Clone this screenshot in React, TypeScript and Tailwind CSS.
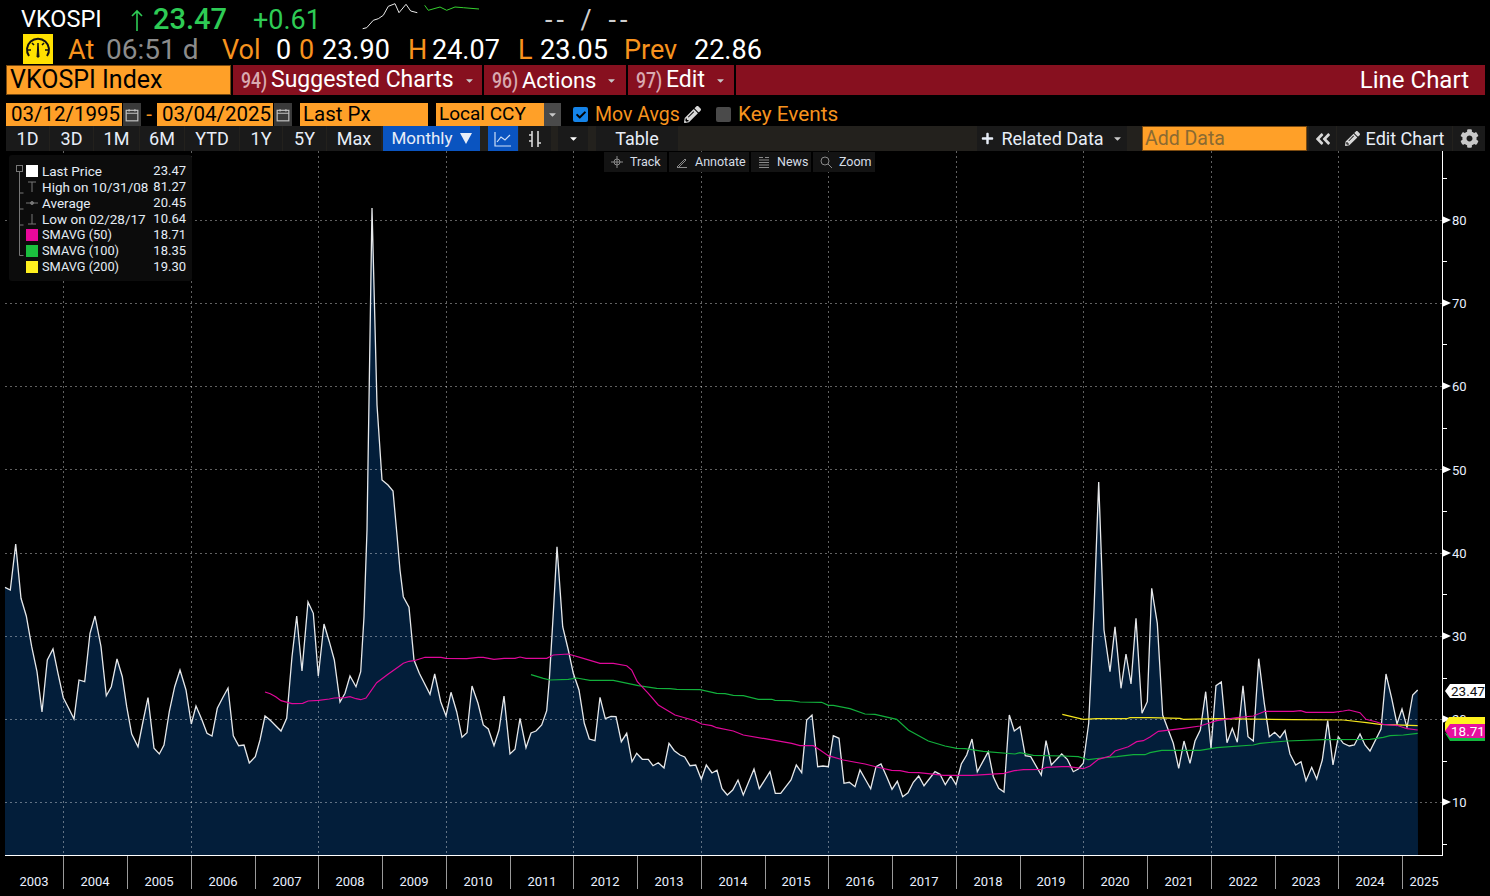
import { FaCog, FaPencilAlt, FaPlus, FaAngleDoubleLeft, FaCheck, FaCaretDown } from 'react-icons/fa'

type Pt = [number, number]

// points were read off 3x crops, so map them back to page pixels
const crop = (x0: number, y0: number, pts: Pt[]): Pt[] =>
  pts.map(([x, y]) => [x0 + x / 3, y0 + y / 3] as Pt)

const price: Pt[] = [
  ...crop(0, 530, [[15,172],[31,180],[47,42],[63,205],[79,258],[95,350],[111,425],[126,546],[142,390],[159,357],[174,430],[190,503],[206,535],[222,567],[237,450],[254,455],[270,310],[285,258],[303,350],[319,497],[334,470],[351,387],[367,440],[380,530],[395,612],[414,650],[430,570],[444,503],[462,655],[478,672],[492,645],[508,545],[524,470],[540,420],[558,480],[574,582],[588,528],[605,568],[621,610],[636,618],[652,535],[668,503],[684,474],[700,617],[716,647],[732,645],[748,699],[766,680],[780,630],[795,558],[811,571],[827,587],[843,603],[860,565],[876,380],[890,258],[906,423],[924,216],[940,250],[955,438],[972,282],[988,335],[1003,390],[1020,516],[1035,490],[1050,438],[1068,470],[1082,425],[1092,260]]),
  [367, 530], [372, 208], [377, 405], [382, 480], [388, 485], [393, 491], [397, 535],
  ...crop(400, 530, [[0,120],[10,200],[27,232],[42,390],[58,430],[90,493],[104,432],[122,515],[138,558],[153,487],[170,545],[186,622],[201,608],[216,468],[234,520],[250,585],[265,597],[282,647],[297,600],[312,498],[330,672],[345,658],[360,565],[378,653],[393,609],[408,603],[425,585],[440,542],[448,450],[460,250],[471,50],[488,290],[505,360],[520,430],[537,480],[553,580],[568,627],[585,632],[600,502],[616,566],[633,559],[648,560],[664,635],[680,610],[696,695],[710,670],[727,688],[745,688],[759,707],[775,698],[792,714],[807,640],[823,662],[840,675],[854,681],[870,707],[887,705],[904,748],[919,705],[936,729],[951,721],[966,776],[982,795],[998,780],[1014,750],[1030,795],[1062,717],[1078,776],[1110,725],[1126,790],[1142,790],[1173,750],[1189,705]]),
  ...crop(800, 530, [[5,728],[20,570],[36,555],[53,710],[69,708],[85,710],[100,617],[117,625],[132,760],[148,757],[165,770],[180,720],[197,750],[212,776],[228,710],[243,702],[260,740],[276,778],[292,754],[308,800],[324,788],[340,757],[356,738],[372,767],[405,725],[420,733],[436,764],[452,738],[468,764],[484,702],[500,675],[516,627],[532,725],[565,665],[580,740],[596,775],[612,786],[628,555],[643,603],[660,590],[676,677],[692,680],[724,735],[738,632],[754,705],[785,672],[802,688],[820,725],[835,717],[850,700],[866,580],[882,240],[896,-144],[912,300],[930,425],[945,290],[963,475],[978,372],[993,462],[1008,265],[1026,550],[1042,515]]),
  ...crop(1150, 570, [[5,55],[22,160],[38,435],[55,480],[70,520],[86,595],[102,513],[120,580],[135,513],[151,480],[167,365],[183,535],[198,347],[214,336],[231,518],[247,475],[262,517],[279,347],[294,500],[310,513],[326,266],[343,400],[358,500],[374,487],[390,503],[405,482],[420,552],[437,585],[453,575],[468,632],[485,592],[500,627],[517,570],[533,452],[549,585],[565,500],[580,520],[598,528],[613,525],[630,492],[645,525],[660,543],[693,477],[708,312],[725,385],[741,462],[756,417],[771,473],[788,375],[803,360]]),
]

const sma50: Pt[] = [
  ...crop(0, 530, [[795,486],[811,491],[827,500],[843,512],[876,521],[908,520],[924,513],[956,511],[988,507],[1003,504],[1035,503],[1050,500],[1068,506],[1082,509],[1098,504],[1130,458],[1165,432],[1200,407]]),
  ...crop(400, 530, [[10,400],[27,394],[42,392],[75,382],[123,382],[138,385],[200,386],[235,382],[250,382],[282,388],[312,385],[345,385],[360,381],[378,385],[440,385],[460,375],[505,372],[550,385],[600,400],[640,400],[680,407],[695,420],[712,455],[745,490],[775,525],[825,555],[885,572],[905,582],[935,587],[950,593],[1000,603],[1030,615],[1095,626],[1175,640],[1200,647]]),
  ...crop(800, 530, [[40,647],[60,660],[85,677],[130,690],[195,702],[230,711],[275,721],[300,722],[325,727],[356,728],[405,733],[430,736],[516,736],[565,733],[612,730],[643,722],[670,719],[724,718],[740,712],[785,710],[805,710],[850,716],[870,708],[895,688],[930,678],[945,663],[985,650],[1010,635],[1030,632],[1050,621]]),
  ...crop(1150, 570, [[25,484],[100,475],[150,468],[200,452],[260,443],[310,438],[345,424],[430,424],[452,422],[468,427],[550,427],[580,423],[597,420],[630,428],[648,448],[680,456],[700,463],[740,466],[771,476],[803,480]]),
]

const sma100: Pt[] = [
  ...crop(400, 530, [[393,434],[430,445],[450,450],[505,448],[530,444],[570,451],[640,451],[715,467],[770,475],[810,476],[830,478],[900,479],[950,490],[975,491],[1000,496],[1030,497],[1075,508],[1115,508],[1125,511],[1170,512],[1200,516]]),
  ...crop(800, 530, [[65,517],[85,526],[100,526],[150,536],[195,552],[225,553],[290,568],[325,600],[385,633],[435,648],[470,655],[495,656],[550,664],[645,672],[660,668],[700,676],[790,678],[835,680],[865,689],[905,684],[950,680],[1000,674],[1035,674],[1050,668]]),
  ...crop(1150, 570, [[35,541],[150,541],[200,533],[310,525],[330,520],[410,513],[520,509],[660,508],[700,502],[720,497],[760,495],[803,490]]),
]

const sma200: Pt[] = [
  ...crop(800, 530, [[787,553],[850,568],[890,566],[980,566],[990,563],[1050,563]]),
  ...crop(1150, 570, [[90,445],[100,448],[200,446],[430,449],[580,450],[650,458],[690,463],[803,467]]),
]

const toPath = (pts: Pt[]) => pts.map(([x, y]) => `${x.toFixed(1)},${y.toFixed(1)}`).join(' ')

const yearTicks = [63, 127, 191, 255, 318, 382, 446, 510, 573, 637, 701, 765, 828, 892, 956, 1020, 1083, 1147, 1211, 1275, 1338, 1402]
const gridX = [63, 191, 318, 446, 573, 701, 828, 956, 1083, 1211, 1338]
const yearLabels: [string, number][] = [
  ['2003', 34], ['2004', 95], ['2005', 159], ['2006', 223], ['2007', 287], ['2008', 350], ['2009', 414], ['2010', 478],
  ['2011', 542], ['2012', 605], ['2013', 669], ['2014', 733], ['2015', 796], ['2016', 860], ['2017', 924], ['2018', 988],
  ['2019', 1051], ['2020', 1115], ['2021', 1179], ['2022', 1243], ['2023', 1306], ['2024', 1370], ['2025', 1424],
]
const majorY: [number, number][] = [[80, 220], [70, 303], [60, 386], [50, 469.5], [40, 553], [30, 636], [20, 719], [10, 802]]
const minorY = [178, 261, 344, 428, 511, 594, 678, 761, 844]

const Chart = () => (
  <svg viewBox="0 151 1490 745" className="block h-[745px] w-[1490px]">
    <polygon points={`5,855 ${toPath(price)} 1418,855`} fill="#031e3a" />
    {gridX.map(x => (
      <line key={x} x1={x + 0.5} x2={x + 0.5} y1={151} y2={855} stroke="#fff" strokeOpacity={0.38} strokeDasharray="2 3" />
    ))}
    {majorY.map(([v, y]) => (
      <line key={v} x1={5} x2={1442} y1={Math.floor(y) + 0.5} y2={Math.floor(y) + 0.5} stroke="#fff" strokeOpacity={0.38} strokeDasharray="2 3" />
    ))}
    <polyline points={toPath(price)} fill="none" stroke="#e6e8ea" strokeWidth={1.3} />
    <polyline points={toPath(sma200)} fill="none" stroke="#f5e61c" strokeWidth={1.2} />
    <polyline points={toPath(sma100)} fill="none" stroke="#12b03c" strokeWidth={1.2} />
    <polyline points={toPath(sma50)} fill="none" stroke="#e0089a" strokeWidth={1.2} />

    {/* axes */}
    <line x1={5} x2={1443} y1={855.5} y2={855.5} stroke="#fff" />
    <line x1={1442.5} x2={1442.5} y1={151} y2={856} stroke="#fff" />
    {minorY.map(y => (
      <line key={y} x1={1442} x2={1447} y1={y + 0.5} y2={y + 0.5} stroke="#fff" />
    ))}
    {majorY.map(([v, y]) => (
      <g key={v}>
        <polygon points={`1442,${y - 4} 1451,${y} 1442,${y + 4}`} fill="#fff" />
        <text x={1452} y={y + 5} fontSize={13} fill="#e8f0ff">{v}</text>
      </g>
    ))}
    {yearTicks.map(x => (
      <line key={x} x1={x + 0.5} x2={x + 0.5} y1={856} y2={889} stroke="#9a9a9a" />
    ))}
    {yearLabels.map(([t, x]) => (
      <text key={t} x={x} y={886} fontSize={13} fill="#e8f0ff" textAnchor="middle">{t}</text>
    ))}

    {/* last value tags */}
    <polygon points="1445,723 1449,717 1485,717 1485,724 1445,731" fill="#fff21f" />
    <polygon points="1445,733 1450,741 1485,741 1485,738 1450,735" fill="#15b83f" />
    <polygon points="1445,731 1450,724 1485,724 1485,738 1450,738" fill="#e8109f" />
    <text x={1451} y={736} fontSize={13.5} fill="#fff">18.71</text>
    <polygon points="1445,691 1450,684 1485,684 1485,698 1450,698" fill="#fff" />
    <text x={1451} y={696} fontSize={13.5} fill="#111">23.47</text>
  </svg>
)

const Gauge = () => (
  <div className="flex h-[30px] w-[30px] shrink-0 items-center justify-center bg-[#ffe100]">
    <svg viewBox="0 0 26 26" className="h-[26px] w-[26px]" fill="none" stroke="#111" strokeWidth={2}>
      <path d="M4 20a11 11 0 1 1 18 0" />
      <path d="M3 14h3M23 14h-3M7 7l2 2M19 7l-2 2" strokeWidth={1.6} />
      <path d="M12 21l1-14 1 14z" fill="#111" strokeWidth={1} />
    </svg>
  </div>
)

const Calendar = () => (
  <div className="flex h-[23px] w-[18px] items-center justify-center bg-[#3a3a3a]">
    <svg viewBox="0 0 12 12" className="h-[14px] w-[14px]" fill="none" stroke="#c4c4c4" strokeWidth={1}>
      <rect x="1" y="2" width="10" height="9" />
      <path d="M1 4.5h10M3.5 1v2M8.5 1v2" />
    </svg>
  </div>
)

const Caret = ({ className = '' }: { className?: string }) => (
  <FaCaretDown className={`text-[11px] text-[#c8c8c8] ${className}`} />
)

const MenuItem = ({ num, label, w, size }: { num: string; label: string; w: string; size: string }) => (
  <div className={`flex h-full items-center whitespace-nowrap bg-[#87101f] pl-2 ${w}`}>
    <span className="w-[30px] origin-left scale-x-[0.8] text-[22px] font-medium text-[#d9a9b0]">{num}</span>
    <span className={`text-white ${size}`}>{label}</span>
    <Caret className="ml-[10px]" />
  </div>
)

const RangeBtn = ({ label, w }: { label: string; w: string }) => (
  <div className={`flex h-full items-center justify-center bg-[#1a1a1a] text-[#e8eef8] ${w}`}>{label}</div>
)

const ToolBtn = ({ label, w, icon }: { label: string; w: string; icon: React.ReactNode }) => (
  <div className={`flex h-full items-center bg-[#131313] pl-[7px] ${w}`}>
    <span className="flex w-[19px] text-[#8a8a8a]">{icon}</span>
    <span className="whitespace-nowrap text-[#d6dde6]">{label}</span>
  </div>
)

const legendRows = [
  { swatch: 'bg-white', label: 'Last Price', value: '23.47' },
  { glyph: 'high', label: 'High on 10/31/08', value: '81.27' },
  { glyph: 'avg', label: 'Average', value: '20.45' },
  { glyph: 'low', label: 'Low on 02/28/17', value: '10.64' },
  { swatch: 'bg-[#e8089a]', label: 'SMAVG (50)', value: '18.71' },
  { swatch: 'bg-[#1bbf3f]', label: 'SMAVG (100)', value: '18.35' },
  { swatch: 'bg-[#fff01f]', label: 'SMAVG (200)', value: '19.30' },
]

const LegendGlyph = ({ kind }: { kind: string }) => (
  <svg viewBox="0 0 12 12" className="h-3 w-3" fill="none" stroke="#777" strokeWidth={1}>
    {kind === 'high' && <path d="M2 1h8M6 1v10" />}
    {kind === 'low' && <path d="M2 11h8M6 1v10" />}
    {kind === 'avg' && (
      <>
        <path d="M0 6h12" />
        <circle cx="6" cy="6" r="1.5" fill="#777" />
      </>
    )}
  </svg>
)

export default function App() {
  return (
    <div className="flex h-[896px] w-[1490px] flex-col overflow-hidden bg-black [font-family:Roboto,sans-serif]">
      {/* quote line */}
      <div className="flex h-[33px] shrink-0 items-center pl-[21px] pt-[7px] text-[27px]">
        <span className="w-[109px] text-[23.5px] text-white">VKOSPI</span>
        <svg viewBox="0 0 14 22" className="h-[22px] w-[14px]" fill="none" stroke="#2ecb55" strokeWidth={1.6}>
          <path d="M7 22V2M2 7l5-5 5 5" />
        </svg>
        <span className="ml-[9px] w-[100px] text-[29px] font-medium text-[#2ecb55]">23.47</span>
        <span className="w-[109px] text-[#2ecb55]">+0.61</span>
        <svg viewBox="362 6 118 27" className="-mt-[7px] h-[27px] w-[118px]" fill="none" strokeWidth={1}>
          <polyline stroke="#e8e8e8" points={toPath(crop(0, 0, [[1088,95],[1100,92],[1120,70],[1135,65],[1150,55],[1165,28],[1185,20],[1197,47],[1218,22],[1232,42],[1252,47]]))} />
          <polyline stroke="#35d12f" points={toPath(crop(0, 0, [[1274,25],[1285,40],[1320,30],[1340,40],[1365,30],[1390,32],[1437,36]]))} />
        </svg>
        <span className="ml-[65px] tracking-[4px] text-[#cfcfcf] [word-spacing:2px]">-- / --</span>
      </div>

      <div className="flex h-[31px] shrink-0 items-center whitespace-nowrap pl-[23px] text-[27px]">
        <Gauge />
        <span className="ml-[15px] mt-[3px] w-[38px] text-[#f7931e]">At</span>
        <span className="mt-[3px] w-[116px] text-[28px] text-[#8c8c8c]">06:51 d</span>
        <span className="mt-[3px] w-[54px] text-[#f7931e]">Vol</span>
        <span className="mt-[3px] w-[23px] text-white">0</span>
        <span className="mt-[3px] w-[23px] text-[#f7931e]">0</span>
        <span className="mt-[3px] w-[86px] text-white">23.90</span>
        <span className="mt-[3px] w-[24px] text-[#f7931e]">H</span>
        <span className="mt-[3px] w-[86px] text-white">24.07</span>
        <span className="mt-[3px] w-[22px] text-[#f7931e]">L</span>
        <span className="mt-[3px] w-[84px] text-white">23.05</span>
        <span className="mt-[3px] w-[70px] text-[#f7931e]">Prev</span>
        <span className="mt-[3px] text-white">22.86</span>
      </div>

      {/* security + menu */}
      <div className="ml-[6px] mt-[1px] flex h-[30px] w-[1479px] shrink-0 gap-[1px] text-[24px]">
        <div className="mr-[1px] flex h-full w-[225px] items-center border border-[#7a4a10] bg-[#ffa028] pl-[3px] text-[25px] text-black">VKOSPI Index</div>
        <MenuItem num="94)" label="Suggested Charts" w="w-[249px]" size="text-[23px]" />
        <MenuItem num="96)" label="Actions" w="w-[142px] ml-[1px]" size="text-[22px]" />
        <MenuItem num="97)" label="Edit" w="w-[106px] ml-[1px]" size="text-[23px]" />
        <div className="ml-[1px] flex h-full flex-1 items-center justify-end bg-[#87101f] pr-[16px] text-white">Line Chart</div>
      </div>

      {/* date / field line */}
      <div className="ml-[6px] mt-[8px] flex h-[23px] shrink-0 items-center whitespace-nowrap text-[20.5px]">
        <div className="flex h-full w-[116px] items-center bg-[#ffa028] pl-[5px] text-black">03/12/1995</div>
        <div className="ml-[1px]"><Calendar /></div>
        <span className="w-[16px] text-center text-[#f7931e]">-</span>
        <div className="flex h-full w-[116px] items-center bg-[#ffa028] pl-[5px] text-black">03/04/2025</div>
        <div className="ml-[1px]"><Calendar /></div>
        <div className="ml-[8px] flex h-full w-[128px] items-center bg-[#ffa028] pl-[3px] text-black">Last Px</div>
        <div className="ml-[8px] flex h-full w-[108px] items-center bg-[#ffa028] pl-[3px] text-[19px] text-black">Local CCY</div>
        <div className="flex h-full w-[17px] items-center justify-center bg-[#4a4a4a]"><Caret /></div>
        <div className="ml-[12px] flex h-[15px] w-[15px] items-center justify-center rounded-[2px] bg-[#1583e8]">
          <FaCheck className="text-[10px] text-black" />
        </div>
        <span className="ml-[7px] w-[85px] text-[19.5px] text-[#f7931e]">Mov Avgs</span>
        <FaPencilAlt className="ml-[4px] text-[17px] text-[#d8d8d8]" />
        <div className="ml-[15px] h-[15px] w-[15px] rounded-[2px] bg-[#4a4a4a]" />
        <span className="ml-[7px] text-[20.8px] text-[#f7931e]">Key Events</span>
      </div>

      {/* range / toolbar strip */}
      <div className="ml-[6px] flex h-[25px] w-[1479px] shrink-0 items-stretch gap-[1px] whitespace-nowrap bg-[#23211d] text-[18px]">
        <RangeBtn label="1D" w="w-[43px]" />
        <RangeBtn label="3D" w="w-[43px]" />
        <RangeBtn label="1M" w="w-[45px]" />
        <RangeBtn label="6M" w="w-[44px]" />
        <RangeBtn label="YTD" w="w-[54px]" />
        <RangeBtn label="1Y" w="w-[42px]" />
        <RangeBtn label="5Y" w="w-[43px]" />
        <RangeBtn label="Max" w="w-[54px]" />
        <div className="ml-[1px] flex h-full w-[97px] items-center justify-center gap-[7px] bg-[#0a54c0] text-[17px] text-[#e8eef8]">
          Monthly
          <svg viewBox="0 0 12 11" className="h-[11px] w-[12px]"><path d="M0 0h12L6 11z" fill="#e8eef8" /></svg>
        </div>
        <div className="ml-[7px] flex h-full w-[30px] items-center justify-center bg-[#0a54c0]">
          <svg viewBox="0 0 18 16" className="h-4 w-[18px]" fill="none" stroke="#cfe0f7" strokeWidth={1.2}>
            <path d="M1 1v14h16M3 11l4-5 4 3 5-5" />
          </svg>
        </div>
        <div className="flex h-full w-[32px] items-center justify-center bg-[#1a1a1a]">
          <svg viewBox="0 0 16 18" className="h-[18px] w-4" fill="none" stroke="#d8d8d8" strokeWidth={1.6}>
            <path d="M5 1v16M2 5h3M11 1v16M11 13h3M2 11h3" />
          </svg>
        </div>
        <div className="ml-[6px] flex h-full w-[30px] items-center justify-center bg-[#1a1a1a]"><Caret className="text-white" /></div>
        <div className="ml-[7px] flex h-full w-[82px] items-center justify-center bg-[#1a1a1a] text-[#e8eef8]">Table</div>
        <div className="flex-1" />
        <div className="flex h-full w-[150px] items-center justify-center gap-[7px] bg-[#1a1a1a] text-[#e8eef8]">
          <FaPlus className="text-[13px]" />
          Related Data
          <Caret className="ml-[1px]" />
        </div>
        <div className="ml-[14px] flex h-full w-[165px] items-center border border-[#7a4a10] bg-[#ffa028] pl-[2px] text-[19.5px] text-[#8a6a32]">Add Data</div>
        <div className="ml-[1px] flex h-full w-[27px] items-center justify-center bg-[#1a1a1a]">
          <FaAngleDoubleLeft className="text-[18px] text-[#d8d8d8]" />
        </div>
        <div className="flex h-full w-[115px] items-center justify-center gap-[6px] bg-[#1a1a1a] text-[#e8eef8]">
          <FaPencilAlt className="text-[15px] text-[#d8d8d8]" />
          Edit Chart
        </div>
        <div className="flex h-full w-[32px] items-center justify-center bg-[#1a1a1a]">
          <FaCog className="text-[19px] text-[#c8c8c8]" />
        </div>
      </div>

      {/* chart */}
      <div className="relative h-[745px] shrink-0">
        <Chart />

        <div className="absolute left-[9px] top-[4px] h-[126px] w-[183px] rounded-[3px] bg-[#0c0c0c] pl-[17px] pr-[6px] pt-[8px] text-[13.5px] leading-[16px] text-[#e4ecf6]">
          <svg viewBox="0 0 12 100" className="absolute left-[6px] top-[9px] h-[100px] w-3" fill="none" stroke="#777">
            <rect x="1.5" y="1.5" width="6" height="6" />
            <path d="M4.5 7.5v84M4.5 29h4M4.5 45h4M4.5 61h4M4.5 91.5h4" />
          </svg>
          {legendRows.map(row => (
            <div key={row.label} className="flex h-4 items-center">
              <span className="flex w-[16px] shrink-0 items-center">
                {row.swatch ? <span className={`h-3 w-3 ${row.swatch}`} /> : <LegendGlyph kind={row.glyph ?? ''} />}
              </span>
              <span className={`flex-1 whitespace-nowrap ${row.swatch && row.label !== 'Last Price' ? 'text-[12.8px]' : ''}`}>{row.label}</span>
              <span className="text-[13px]">{row.value}</span>
            </div>
          ))}
        </div>

        <div className="absolute left-[604px] top-[1px] flex h-[20px] gap-[2px] text-[12.5px]">
          <ToolBtn label="Track" w="w-[63px]" icon={
            <svg viewBox="0 0 12 12" className="h-3 w-3" fill="none" stroke="currentColor"><circle cx="6" cy="6" r="3" /><path d="M6 0v12M0 6h12" /></svg>
          } />
          <ToolBtn label="Annotate" w="w-[80px]" icon={
            <svg viewBox="0 0 12 12" className="h-3 w-3" fill="none" stroke="currentColor"><path d="M1 11l8-8 1 1-8 8zM1 11.5h10" /></svg>
          } />
          <ToolBtn label="News" w="w-[60px]" icon={
            <svg viewBox="0 0 12 12" className="h-3 w-3" fill="none" stroke="currentColor"><path d="M1 1.5h4M1 4h10M1 6.5h10M1 9h10M1 11.5h10M7 1.5h4" /></svg>
          } />
          <ToolBtn label="Zoom" w="w-[62px]" icon={
            <svg viewBox="0 0 12 12" className="h-3 w-3" fill="none" stroke="currentColor"><circle cx="5" cy="5" r="4" /><path d="M8 8l4 4" /></svg>
          } />
        </div>
      </div>
    </div>
  )
}
